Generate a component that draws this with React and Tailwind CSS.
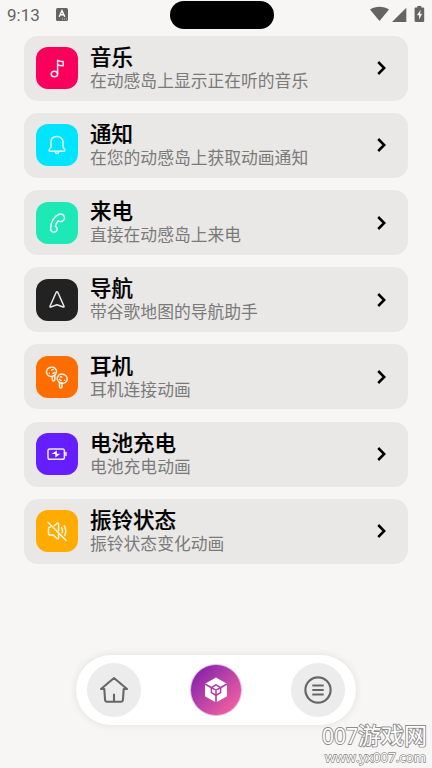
const features = [
  { title: '音乐', text: '在动感岛上显示正在听的音乐', color: 'bg-[#f8005c]', icon: MusicIcon },
  { title: '通知', text: '在您的动感岛上获取动画通知', color: 'bg-[#00e5ff]', icon: BellIcon },
  { title: '来电', text: '直接在动感岛上来电', color: 'bg-[#1de9b6]', icon: PhoneIcon },
  { title: '导航', text: '带谷歌地图的导航助手', color: 'bg-[#222222]', icon: NavigationIcon },
  { title: '耳机', text: '耳机连接动画', color: 'bg-[#ff6d00]', icon: EarbudsIcon },
  { title: '电池充电', text: '电池充电动画', color: 'bg-[#651fff]', icon: BatteryIcon },
  { title: '振铃状态', text: '振铃状态变化动画', color: 'bg-[#ffab00]', icon: MuteIcon },
];

function TileIcon({ children }) {
  return (
    <svg
      className="size-[42px]"
      viewBox="0 0 42 42"
      fill="none"
      stroke="white"
      strokeOpacity="0.9"
      strokeWidth="1.5"
      strokeLinecap="round"
      strokeLinejoin="round"
    >
      {children}
    </svg>
  );
}

function MusicIcon() {
  return (
    <TileIcon>
      <ellipse cx="18.4" cy="27" rx="3.2" ry="2.8" />
      <path d="M21.6 27V13.2c1.2 1.2 3.4 1.2 5.6 1.4v4.2c-2.2 0-4.4-.2-5.6-1.2" />
    </TileIcon>
  );
}

function BellIcon() {
  return (
    <TileIcon>
      <path d="M21 12.6c-3.8 0-6 2.4-6 5.6v4.6c0 1.1-1.8 2-1.8 3.4 0 .7.5 1.1 1.2 1.1h13.2c.7 0 1.2-.4 1.2-1.1 0-1.4-1.8-2.3-1.8-3.4v-4.6c0-3.2-2.2-5.6-6-5.6z" />
      <path d="M19.2 27.6c.2 2.6 3.4 2.6 3.6 0" />
    </TileIcon>
  );
}

function PhoneIcon() {
  return (
    <TileIcon>
      <path d="M23 12.2c-4.8 2-8.6 8.2-8.4 14.8.1 1.7 1.5 3 3.3 3s3.3-1.2 3.2-3c0-1.3-.6-2-1.7-2.7.5-2.3 1.3-3.9 2.6-5.4 1.4.8 2.8.9 4.2.3 1.9-.8 2.7-2.8 2-4.6-.8-2-2.9-3.1-5.2-2.4z" />
    </TileIcon>
  );
}

function NavigationIcon() {
  return (
    <TileIcon>
      <path d="M20.2 13.3 14 27.2c-.2.6.2 1 .8.8L21 25.8l6.2 2.2c.6.2 1-.2.8-.8l-6.2-13.9c-.4-.8-1.2-.8-1.6 0z" />
    </TileIcon>
  );
}

function EarbudsIcon() {
  return (
    <TileIcon>
      <ellipse cx="15.5" cy="15.8" rx="5" ry="4.6" transform="rotate(-20 15.5 15.8)" />
      <path d="M16.3 20.5v3.1c0 1.8 2.5 1.8 2.5 0v-4.2M13.3 17.2v.1M15.8 13.9l1.3-.3M17 17.5l1.8-1" />
      <ellipse cx="26.2" cy="22.7" rx="5" ry="4.5" transform="rotate(20 26.2 22.7)" />
      <path d="M23.5 26.8v3.9c0 1.8 2.5 1.8 2.5 0v-3.6M24.3 20.8l1.3.3M23.6 23.5l1.5 1M28.6 24.2v.1" />
    </TileIcon>
  );
}

function BatteryIcon() {
  return (
    <TileIcon>
      <rect x="12" y="15.9" width="16.4" height="10.3" rx="1.8" />
      <path d="M30 19.6v3" />
      <path d="M20.8 17.4 15.6 21h3.7l.1 3.6 5-3.900h-3.500z" fill="white" stroke="none" />
    </TileIcon>
  );
}

function MuteIcon() {
  return (
    <TileIcon>
      <path d="m12 12.2 18 18.2" />
      <path d="M18.3 15.8 21 13.4c.8-.6 1.6-.2 1.6.8v6.3M14.3 17c-1.3 0-1.8.7-1.8 1.8v4.4c0 1.2.6 1.8 1.8 1.8h2.9l3.9 3.6c.8.6 1.5.2 1.5-.8v-3.9M25.6 17.6c1.1 1.7 1.2 3.400.7 5M28.2 15.8c1.900 3.200 1.900 6.800.5 9.600" />
    </TileIcon>
  );
}

function StatusBar() {
  return (
    <header className="flex h-[35.6px] shrink-0 items-start">
      <span className="ml-[7px] mt-[3px] w-[49px] font-['Roboto'] text-[17px] leading-6 text-[#646464]">9:13</span>
      <svg className="mt-2 h-[13px] w-3" viewBox="0 0 12 13">
        <rect width="12" height="13" rx="1.5" fill="#646464" />
        <path d="m3.2 8.7 2.8-6 2.8 6M4.3 6.7h3.4" fill="none" stroke="white" strokeWidth="1.4" />
        <path d="M6 11h1m1 0h1m1 0h1" stroke="#ddd" strokeWidth=".8" />
      </svg>
      <div className="ml-[102px] mt-px h-7 w-[104px] rounded-full bg-black" />
      <svg className="ml-[96px] mt-[6px] h-4 w-[55px]" viewBox="0 0 55 16" fill="#646464">
        <path d="M0 3.5C5.5-.2 13.5-.2 19 3.5L9.5 15z" />
        <path d="M36.3 1.8V16H22z" />
        <path d="M47.3 1.5V0h4v1.5h1.7c.8 0 1.2.4 1.2 1.2v12c0 .8-.4 1.2-1.2 1.2h-7.2c-.8 0-1.2-.4-1.2-1.2v-12c0-.8.4-1.2 1.2-1.2z" />
        <path d="m50.7 3.7-3.8 5.5h2.2v4.3l3-5.7h-2.1z" fill="#f7f6f4" />
      </svg>
    </header>
  );
}

function FeatureCard({ title, text, color, icon: Icon }) {
  return (
    <button className="flex h-[65px] w-full items-center rounded-[14px] bg-[#e9e8e6] pl-3 pr-[21px] text-left">
      <div className={`size-[42px] shrink-0 rounded-[12px] ${color}`}>
        <Icon />
      </div>
      <div className="ml-3 flex-1 whitespace-nowrap pb-[0.6px]">
        <h2 className="text-[21.5px] leading-[25px] font-medium text-black [-webkit-text-stroke:0.2px_black]">{title}</h2>
        <p className="text-[16.8px] leading-[25px] font-normal text-[#7a7a7a]">{text}</p>
      </div>
      <svg className="h-[14px] w-[10px]" viewBox="0 0 10 14" fill="none" stroke="black" strokeWidth="2.5">
        <path d="m1.2 1 6 6-6 6" />
      </svg>
    </button>
  );
}

function BottomNav() {
  return (
    <nav className="mx-auto flex h-[70px] w-[280px] items-center justify-between rounded-full bg-white px-[11px] shadow-[0_0_9px_rgba(0,0,0,0.09)]">
      <button className="flex size-[54px] items-center justify-center rounded-full bg-[#ececec]">
        <svg className="size-[30px]" viewBox="0 0 30 30" fill="none" stroke="#676767" strokeWidth="2.1" strokeLinecap="round" strokeLinejoin="round">
          <path d="M2 14 15 3l13 11h-3.3l-.8 11.2c-.1 1-.5 1.5-1.5 1.5H7.6c-1 0-1.4-.5-1.5-1.5L5.3 14zM15 19.500v7" />
        </svg>
      </button>
      <button className="flex size-[52px] items-center justify-center rounded-full border border-[#e4b8e9] bg-linear-to-br from-[#8e24aa] from-15% to-[#f65e9e] to-90%">
        <svg className="size-[26px]" viewBox="0 0 26 26" fill="none">
          <path d="M13 .5 24 6.7v12.6L13 25.5 2 19.3V6.7z" fill="white" />
          <path d="m2 7 6.5 3.7M24 7l-6.5 3.700M13 17.500V26" stroke="#af3ba8" strokeWidth="1.6" />
          <path d="m13 7.9 4.6 2.7v5L13 18.3l-4.6-2.7v-5zM8.8 10.8 13 13.2l4.2-2.4M13 13.200v4.500" stroke="#af3ba8" strokeWidth="1.5" />
        </svg>
      </button>
      <button className="flex size-[54px] items-center justify-center rounded-full bg-[#ececec]">
        <svg className="size-[28px]" viewBox="0 0 28 28" fill="none" stroke="#676767" strokeWidth="2.2">
          <circle cx="14" cy="14" r="12.6" />
          <path d="M8.3 9.5h11.4M8.3 14h11.4M8.3 18.5h11.4" />
        </svg>
      </button>
    </nav>
  );
}

export default function App() {
  return (
    <div className="relative flex h-[768px] w-[432px] flex-col overflow-hidden bg-[#f7f6f4] font-['Noto_Sans_CJK_SC',sans-serif]">
      <StatusBar />
      <main className="flex h-[528.4px] shrink-0 flex-col justify-between px-6">
        {features.map((feature) => (
          <FeatureCard key={feature.title} {...feature} />
        ))}
      </main>
      <div className="mt-[91px]">
        <BottomNav />
      </div>
      <div className="absolute right-[5px] top-[721px] flex flex-col items-end whitespace-nowrap text-white [paint-order:stroke_fill] [-webkit-text-stroke:1.8px_#8c8c8c]">
        <span className="text-[23px] leading-[26px]">
          <span className="font-['Open_Sans'] text-[21px]">007</span>游戏网
        </span>
        <span className="mr-px font-['Open_Sans'] text-[13.3px] leading-[17px] [-webkit-text-stroke:1.4px_#8c8c8c]">www.yx007.com</span>
      </div>
    </div>
  );
}
